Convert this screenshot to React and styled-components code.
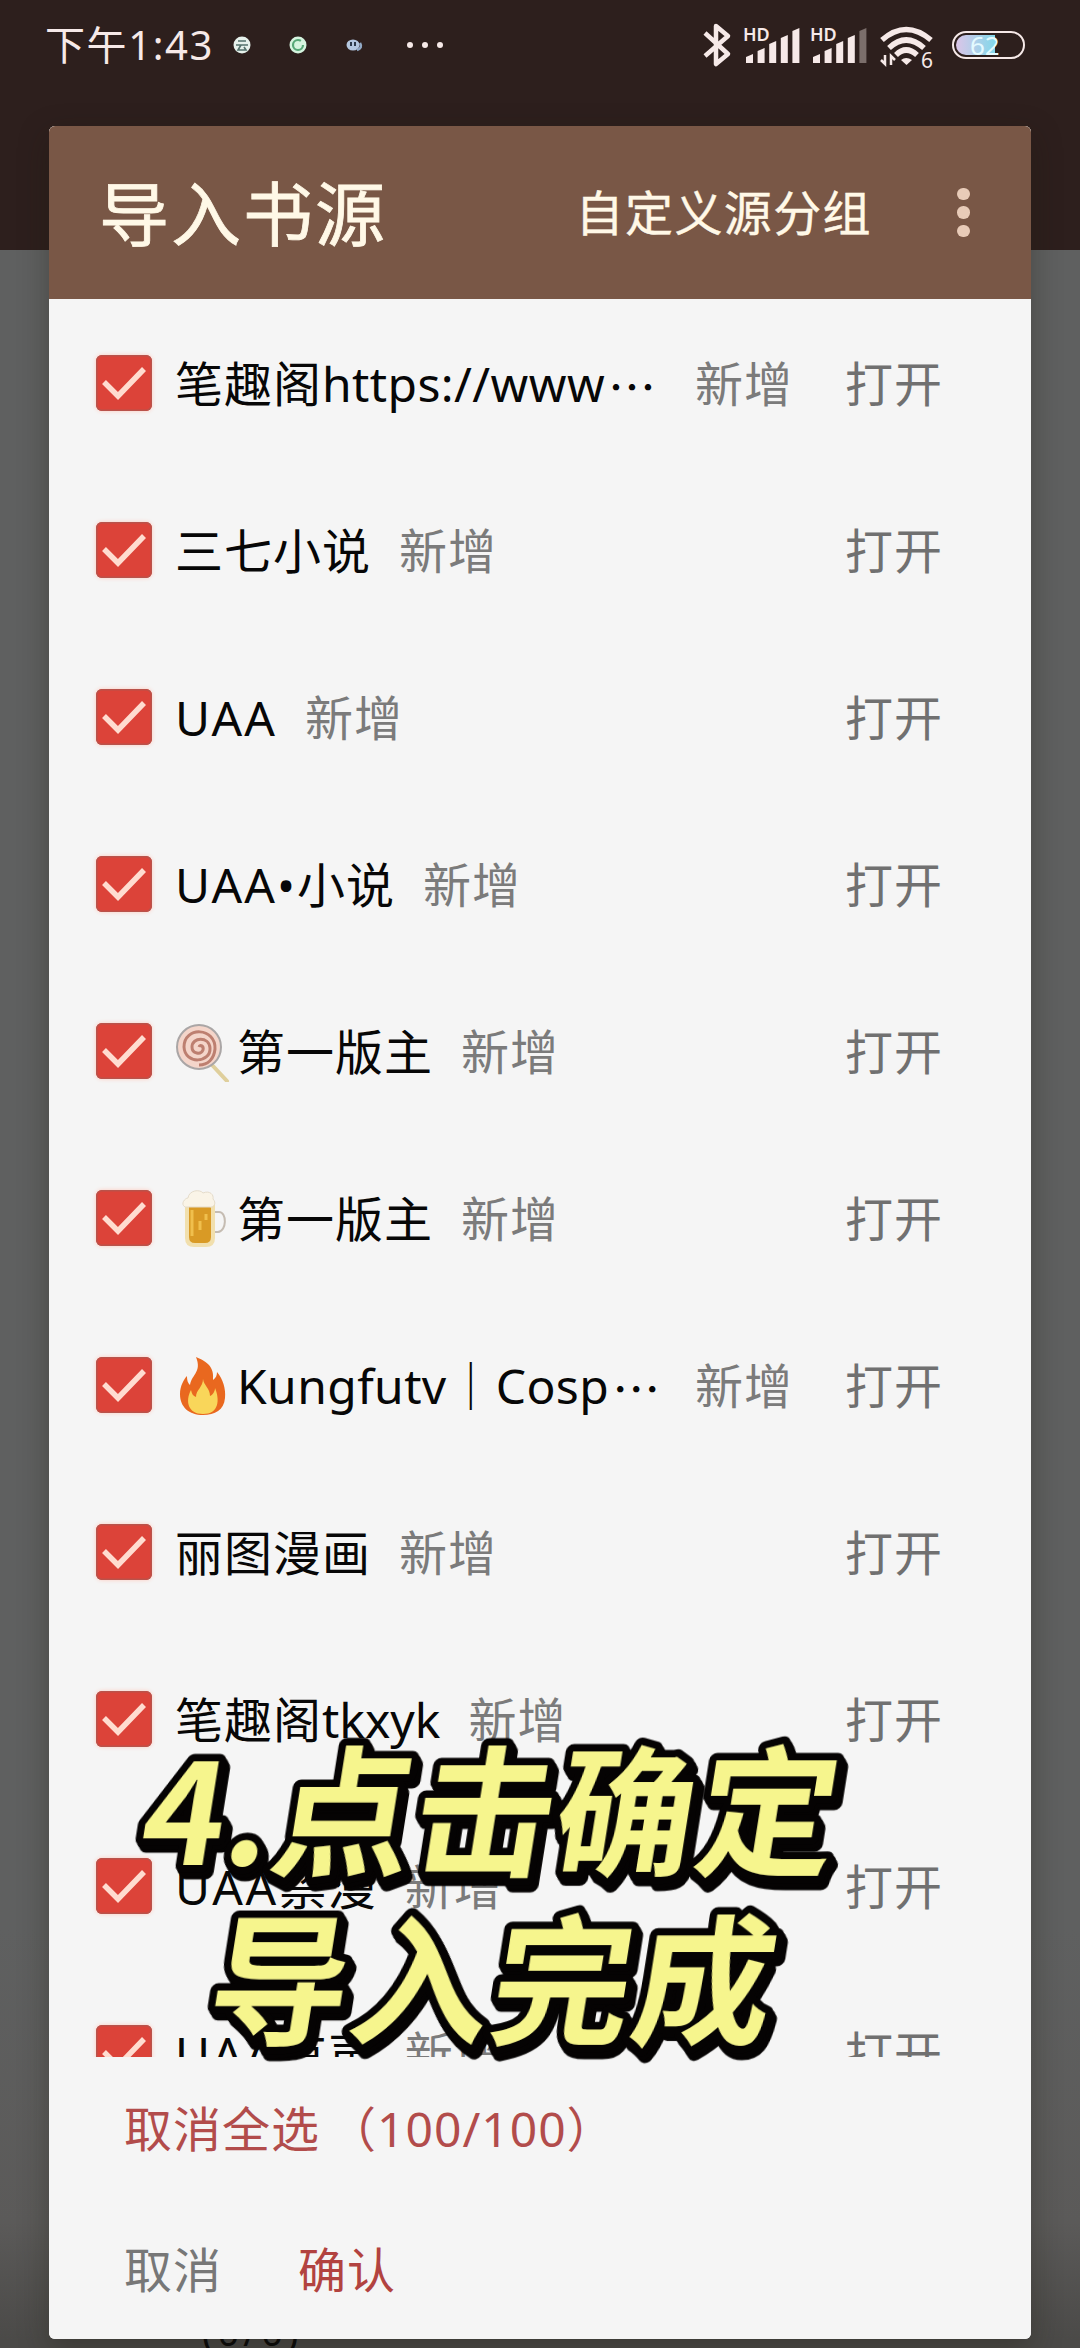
import React from "react";
import styled, { createGlobalStyle } from "styled-components";

const GlobalStyle = createGlobalStyle`
  body {
    margin: 0;
    font-family: "Noto Sans", "Noto Sans CJK SC", sans-serif;
  }
`;

const Screen = styled.div`
  position: relative;
  width: 1080px;
  height: 2348px;
  overflow: hidden;
  display: flex;
  flex-direction: column;
  background: #5e5e5e;
`;

const TopArea = styled.div`
  height: 250px;
  flex: none;
  background: #2d1f1d;
`;

const StatusBar = styled.div`
  height: 90px;
  box-sizing: border-box;
  padding: 0 55px 0 45px;
  display: flex;
  align-items: center;
  color: #f6e9e8;
`;

const Time = styled.span`
  width: 182px;
  font-size: 40px;
  line-height: 60px;
  letter-spacing: 1.6px;
  white-space: nowrap;
`;

const Notices = styled.svg`
  width: 225px;
  height: 90px;
`;

const StatusIcons = styled.svg`
  width: 325px;
  height: 90px;
  margin-left: auto;
`;

const Backdrop = styled.div`
  flex: 1;
  display: flex;
  align-items: flex-end;
  padding: 0 0 0 202px;
  background: linear-gradient(#5f6060 80%, #5b5a59 94%, #4b4a48 99.6%);
  color: #080808;
`;

const PageCount = styled.span`
  font-size: 38px;
  line-height: 20px;
  height: 27px;
  letter-spacing: 4px;
`;

const Dialog = styled.div`
  position: absolute;
  left: 49px;
  top: 126px;
  width: 982px;
  height: 2213px;
  display: flex;
  flex-direction: column;
  overflow: hidden;
  border-radius: 6px;
  background: #f5f5f5;
`;

const DialogShadow = styled(Dialog)`
  overflow: visible;
  box-shadow: 0 10px 30px rgba(30, 25, 15, 0.35);
`;

const Header = styled.div`
  height: 173px;
  flex: none;
  box-sizing: border-box;
  padding: 0 62px 0 50px;
  display: flex;
  align-items: center;
  background: #795746;
  color: #fff8e7;
`;

const Title = styled.h1`
  margin: 2px 0 0;
  font-size: 70px;
  line-height: 90px;
  font-weight: 400;
  letter-spacing: 2px;
  -webkit-text-stroke: 0.8px #fff8e7;
`;

const GroupAction = styled.span`
  margin: 0 0 5px auto;
  font-size: 48px;
  letter-spacing: 1.4px;
  -webkit-text-stroke: 0.4px #fff8e7;
`;

const More = styled.div`
  width: 12px;
  margin-left: 85px;
  display: flex;
  flex-direction: column;
  gap: 6px;
`;

const Dot = styled.i`
  width: 12.5px;
  height: 12.5px;
  border-radius: 50%;
  background: #e8cbb8;
`;

const List = styled.ul`
  height: 1758px;
  flex: none;
  margin: 0;
  padding: 0;
  overflow: hidden;
  list-style: none;
`;

const Item = styled.li`
  height: 167px;
  box-sizing: border-box;
  padding: 0 88px 0 47px;
  display: flex;
  align-items: center;
  font-size: 48px;
  line-height: 64px;
  letter-spacing: 1px;
  white-space: nowrap;
`;

const CheckBox = styled.span`
  width: 56px;
  height: 56px;
  margin-right: 23px;
  flex: none;
  display: flex;
  border-radius: 6px;
  background: #dc4339;
  box-shadow: inset 0 0 0 1.5px #b9534b, 0 0 4px #ffc9bd;
`;

const Name = styled.span`
  min-width: ${(props) => (props.$clipped ? "492px" : "0")};
  margin-top: 2px;
  display: flex;
  align-items: center;
  color: #070707;
`;

const Latin = styled.span`
  letter-spacing: ${(props) => props.$tracking || 0}px;
`;

const Ellipsis = styled.span`
  font-family: "Noto Sans CJK SC", sans-serif;
  margin-left: 3px;
`;

const Tag = styled.span`
  margin: 2px 0 0 28px;
  color: #7b7b7b;
`;

const Open = styled.span`
  margin: 2px 0 0 auto;
  color: #707070;
`;

const Emoji = styled.svg`
  width: 56px;
  height: 60px;
  margin-right: 6px;
  flex: none;
`;

const Footer = styled.div`
  flex: 1;
  padding: 36px 0 0 75px;
  font-size: 48px;
  line-height: 72px;
  letter-spacing: 1px;
`;

const Toggle = styled.div`
  color: #b24c4b;
`;

const Count = styled.span`
  margin-left: 8px;
  letter-spacing: 1px;
`;

const Buttons = styled.div`
  margin-top: 69px;
  display: flex;
  gap: 76px;
`;

const Button = styled.span`
  color: ${(props) => (props.$primary ? "#b24340" : "#777")};
`;

const Caption = styled.svg`
  position: absolute;
  left: 120px;
  top: 1710px;
  width: 780px;
  height: 370px;
  font-family: "Noto Sans CJK SC", sans-serif;
  font-size: 140px;
  font-weight: 700;
  letter-spacing: 1.2px;
`;

const CaptionText = styled.text`
  fill: #f6f58d;
  stroke: #050303;
  stroke-width: 15px;
  stroke-linejoin: round;
  paint-order: stroke;
  filter: drop-shadow(2px 3px 0 #050303) drop-shadow(3px 4px 0 #050303);
`;

const Lollipop = () => (
  <Emoji viewBox="0 0 56 60">
    <path d="M38 44 52 59" stroke="#dfcf9c" strokeWidth="4" strokeLinecap="round" />
    <circle cx="24" cy="25" r="22" fill="#f4d5ca" stroke="#aaa6a6" strokeWidth="2" />
    <path
      d="M24 25c1-3 5-1 4 3-2 5-11 4-11-3 0-10 17-11 18 1 1 15-25 17-26-1C9 4 41 5 40 27 39 37 33 43 24 43"
      fill="none"
      stroke="#bd7f70"
      strokeWidth="3"
    />
  </Emoji>
);

const Beer = () => (
  <Emoji viewBox="0 0 56 60">
    <path d="M38 23h6c8 0 8 19-1 20h-6" fill="none" stroke="#c5bcb2" strokeWidth="2" />
    <path d="M10 13h30v36q0 9-9 9H19q-9 0-9-9z" fill="#f1dfad" />
    <path d="M14 18h22v30q0 6-6 6H20q-6 0-6-6z" fill="#d99a25" />
    <path d="M17 21v26M25 32v9M31 25v6" stroke="#f0bf4d" strokeWidth="3" />
    <path d="M10 18c-5-3 0-9 3-9 1-8 12-9 15-5 7-3 11 2 10 6 4 4 1 9-4 8z" fill="#faf4e7" stroke="#e5dccb" />
  </Emoji>
);

const Fire = () => (
  <Emoji viewBox="0 0 56 60">
    <path
      d="M21 1c15 6 18 13 17 23 3-2 4-5 4-8 6 7 9 17 8 26-1 12-10 17-22 17C14 59 5 51 5 38c0-8 4-15 7-18 0 5 1 7 3 9 2-11 12-13 6-28z"
      fill="#e9681f"
    />
    <path
      d="M28 23c1 7 7 9 7 17 3-1 5-5 5-8 5 12 4 26-12 26-15 0-18-13-12-24 1 4 2 6 5 7 0-7 7-10 7-18z"
      fill="#f9d65a"
    />
  </Emoji>
);

const emojis = { lollipop: Lollipop, beer: Beer, fire: Fire };

const sources = [
  { name: "笔趣阁", latin: "https://www", tracking: 0.4, clipped: true },
  { name: "三七小说" },
  { latin: "UAA", tracking: 2 },
  { latin: "UAA•", tracking: 2, after: "小说" },
  { emoji: "lollipop", name: "第一版主" },
  { emoji: "beer", name: "第一版主" },
  { emoji: "fire", latin: "Kungfutv", tracking: 0.4, after: "｜", tail: "Cosp", clipped: true },
  { name: "丽图漫画" },
  { name: "笔趣阁", latin: "tkxyk" },
  { latin: "UAA", tracking: 2.6, after: "禁漫" },
  { latin: "UAA", tracking: 2.6, after: "有声" },
];

const SourceItem = ({ source }) => {
  const Icon = emojis[source.emoji];
  return (
    <Item>
      <CheckBox>
        <svg width="56" height="56" viewBox="0 0 56 56">
          <path d="m8 27 14 14 26-27" fill="none" stroke="#ffdcd0" strokeWidth="5.5" />
        </svg>
      </CheckBox>
      <Name $clipped={source.clipped}>
        {Icon && <Icon />}
        {source.name}
        {source.latin && <Latin $tracking={source.tracking}>{source.latin}</Latin>}
        {source.after}
        {source.tail && <Latin $tracking={source.tracking}>{source.tail}</Latin>}
        {source.clipped && <Ellipsis>…</Ellipsis>}
      </Name>
      <Tag>新增</Tag>
      <Open>打开</Open>
    </Item>
  );
};

const Signal = ({ x, weak }) => (
  <g transform={`translate(${x} 0)`}>
    <text x="-3" y="40.5" fontSize="18" fontWeight="600" fill="#f6e9e8">
      HD
    </text>
    {[54, 48, 41, 35, 28].map((top, i) => (
      <path
        key={top}
        d={`M${i * 11.6} ${top + 3}l7-3v${63 - top}h-7z`}
        fill={weak && i === 4 ? "#7b6e6b" : "#f6e9e8"}
      />
    ))}
  </g>
);

const App = () => (
  <>
    <GlobalStyle />
    <Screen>
      <TopArea>
        <StatusBar>
          <Time>下午1:43</Time>
          <Notices viewBox="227 0 225 90">
            <circle cx="242" cy="45" r="8.5" fill="#e6f1ec" />
            <path d="M238 41h8M236 45h12M241 45l-3 5h8l-2-3" fill="none" stroke="#53716c" strokeWidth="1.6" />
            <circle cx="298" cy="45" r="8.5" fill="#d5f4df" />
            <circle cx="298" cy="45" r="5" fill="none" stroke="#56a777" strokeWidth="2.2" strokeDasharray="26 5" />
            <ellipse cx="353" cy="45" rx="6.5" ry="5.5" fill="#b4c7df" />
            <path d="M351 42v4M355 42v4" stroke="#2c3949" strokeWidth="2" />
            <path d="M360 43q3 5-3 7" fill="none" stroke="#91a9c6" strokeWidth="2.5" />
            <g fill="#f6e9e8">
              <circle cx="410" cy="45" r="3" />
              <circle cx="425" cy="45" r="3" />
              <circle cx="440" cy="45" r="3" />
            </g>
          </Notices>
          <StatusIcons viewBox="700 0 325 90">
            <path
              d="m705 33 23 21-12 10V26l12 10-23 20"
              fill="none"
              stroke="#f6e9e8"
              strokeWidth="4.5"
              strokeLinejoin="round"
            />
            <Signal x={746} />
            <Signal x={813} weak />
            <g fill="none" stroke="#f6e9e8" strokeWidth="5.5">
              <path d="M882 40q24-21 49 0" />
              <path d="M889 48q17-16 35 0" />
              <path d="M896 55q10-10 21 0" />
            </g>
            <path d="m901 60q5-4 11 0l-5.5 5z" fill="#f6e9e8" />
            <path d="M885 55v9l-4-4M891 65v-9l4 4" fill="none" stroke="#f6e9e8" strokeWidth="2.5" />
            <text x="921" y="68" fontSize="21" fill="#f6e9e8">
              6
            </text>
            <defs>
              <linearGradient id="charge">
                <stop offset="0" stopColor="#dcc5e8" />
                <stop offset="1" stopColor="#83d8ea" />
              </linearGradient>
            </defs>
            <rect x="953" y="32" width="71" height="26" rx="13" fill="none" stroke="#f6e9e8" strokeWidth="2" />
            <path d="M995 35v20h-29a10 10 0 0 1 0-20z" fill="url(#charge)" />
            <text x="970" y="55" fontSize="26" fill="#e4faff">
              62
            </text>
          </StatusIcons>
        </StatusBar>
      </TopArea>
      <Backdrop>
        <PageCount>(0/0)</PageCount>
      </Backdrop>
      <DialogShadow />
      <Dialog>
        <Header>
          <Title>导入书源</Title>
          <GroupAction>自定义源分组</GroupAction>
          <More>
            <Dot />
            <Dot />
            <Dot />
          </More>
        </Header>
        <List>
          {sources.map((source, i) => (
            <SourceItem key={i} source={source} />
          ))}
        </List>
        <Footer>
          <Toggle>
            取消全选<Count>（100/100）</Count>
          </Toggle>
          <Buttons>
            <Button>取消</Button>
            <Button $primary>确认</Button>
          </Buttons>
        </Footer>
      </Dialog>
      <Caption viewBox="120 1710 780 370">
        <CaptionText transform="translate(136 1865) skewX(-9)">4.点击确定</CaptionText>
        <CaptionText transform="translate(203 2034) skewX(-9)">导入完成</CaptionText>
      </Caption>
    </Screen>
  </>
);

export default App;
